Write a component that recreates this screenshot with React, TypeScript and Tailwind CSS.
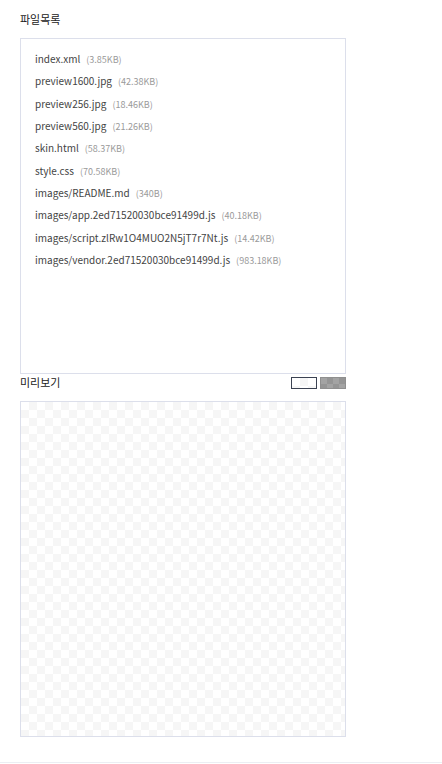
import React from "react";

type FileItem = {
  name: string;
  size: string;
};

const files: FileItem[] = [
  { name: "index.xml", size: "3.85KB" },
  { name: "preview1600.jpg", size: "42.38KB" },
  { name: "preview256.jpg", size: "18.46KB" },
  { name: "preview560.jpg", size: "21.26KB" },
  { name: "skin.html", size: "58.37KB" },
  { name: "style.css", size: "70.58KB" },
  { name: "images/README.md", size: "340B" },
  { name: "images/app.2ed71520030bce91499d.js", size: "40.18KB" },
  { name: "images/script.zlRw1O4MUO2N5jT7r7Nt.js", size: "14.42KB" },
  { name: "images/vendor.2ed71520030bce91499d.js", size: "983.18KB" },
];

const lightChecker =
  "bg-white bg-[linear-gradient(45deg,#f6f6f6_25%,transparent_25%,transparent_75%,#f6f6f6_75%),linear-gradient(45deg,#f6f6f6_25%,transparent_25%,transparent_75%,#f6f6f6_75%)] bg-[length:16px_16px] bg-[position:0_0,8px_8px]";

export default function App() {
  return (
    <div className="min-h-[764px] w-[442px] bg-white font-['Noto_Sans_CJK_KR','Noto_Sans',sans-serif] text-[#222]">
      <div className="px-5 pt-[10px] pb-[24px]">
        <h2 className="text-[11px] leading-[18px]">파일목록</h2>

        <div className="mt-[10px] h-[336px] w-[326px] border border-[#dcdfeb] px-[14px] pt-[9px]">
          <ul>
            {files.map((f) => (
              <li key={f.name} className="flex items-baseline h-[22.35px] leading-[22px]">
                <span className="text-[10px] text-[#444]">{f.name}</span>
                <span className="ml-[6px] text-[9px] text-[#9a9a9a]">({f.size})</span>
              </li>
            ))}
          </ul>
        </div>

        <div className="flex w-[326px] items-start justify-between pt-[1px]">
          <h2 className="text-[11px] leading-[14px]">미리보기</h2>
          <div className="mt-[2px] flex gap-[3px]">
            <button
              className={`h-[12px] w-[26px] border border-[#3b4252] ${lightChecker}`}
            />
            <button className="h-[12px] w-[26px] border border-[#8f8f8f] bg-[#a3a3a3] bg-[linear-gradient(45deg,#959595_25%,transparent_25%,transparent_75%,#959595_75%),linear-gradient(45deg,#959595_25%,transparent_25%,transparent_75%,#959595_75%)] bg-[length:12px_12px] bg-[position:0_0,6px_6px]" />
          </div>
        </div>

        <div className={`mt-[12px] h-[336px] w-[326px] border border-[#dcdfeb] ${lightChecker}`} />
      </div>

      <div className="mt-[1px] border-t border-[#eceef3]" />
    </div>
  );
}
